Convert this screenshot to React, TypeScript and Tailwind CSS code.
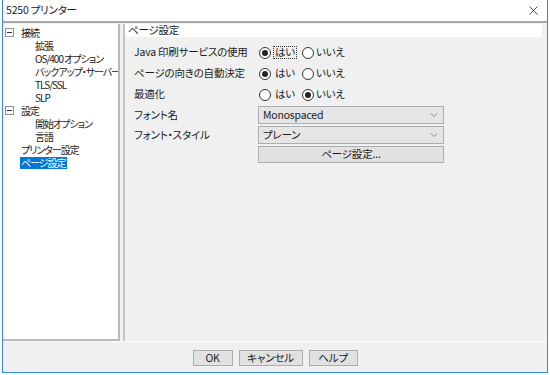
import { ChevronDown, X } from 'lucide-react';

// Tree entries: depth 0 = top-level node, 1 = child
const tree = [
  { label: '接続', depth: 0, box: true },
  { label: '拡張', depth: 1 },
  { label: 'OS/400 オプション', depth: 1 },
  { label: 'バックアップ・サーバー', depth: 1 },
  { label: 'TLS/SSL', depth: 1 },
  { label: 'SLP', depth: 1 },
  { label: '設定', depth: 0, box: true },
  { label: '開始オプション', depth: 1 },
  { label: '言語', depth: 1 },
  { label: 'プリンター設定', depth: 0 },
  { label: 'ページ設定', depth: 0, selected: true },
];

const radioRows = [
  { label: 'Java 印刷サービスの使用', yes: true, focus: true },
  { label: 'ページの向きの自動決定', yes: true },
  { label: '最適化', yes: false },
];

const Radio = ({ on }: { on: boolean }) => (
  <span className="w-[12px] h-[12px] rounded-full border border-[#333333] bg-white flex items-center justify-center">
    {on && <span className="w-[6px] h-[6px] rounded-full bg-[#222222]" />}
  </span>
);

const MinusBox = () => (
  <span className="w-[9px] h-[9px] border border-[#919191] bg-white flex items-center justify-center">
    <span className="w-[5px] h-px bg-[#333333]" />
  </span>
);

export default function App() {
  return (
    <div
      className="w-[550px] h-[375px] bg-white text-[#1a1a1a] text-[10.5px] leading-none overflow-hidden whitespace-nowrap [font-feature-settings:'palt'] tracking-[-0.2px]"
      style={{ fontFamily: '"Noto Sans CJK JP", "Noto Sans", sans-serif' }}
    >
      <div className="ml-[2px] w-[546px] h-[373px] border border-t-0 border-[#2f8de4] flex flex-col">
        {/* Title bar */}
        <div className="h-[23px] bg-white flex items-center justify-between pl-[3px] pr-[6px] border-b-2 border-[#a9a9a9]">
          <span>5250 プリンター</span>
          <X size={15} strokeWidth={1.2} className="text-[#111111]" />
        </div>

        <div className="flex-1 bg-[#f0f0f0] flex flex-col">
          <div className="h-[318px] flex pt-[1px]">
            {/* Tree panel */}
            <div className="w-[117px] bg-white border-r-2 border-b-2 border-[#b9b9b9] pt-[2px] overflow-hidden text-[10px] tracking-[-1px]">
              {tree.map((t, i) => (
                <div key={i} className="h-[13px] flex items-center">
                  {t.depth === 0 ? (
                    <div className="flex items-center">
                      <span className="w-[17px] pl-[2px] flex">{t.box && <MinusBox />}</span>
                      <span className={t.selected ? 'bg-[#0078d7] text-white px-[1px] py-[1px]' : 'px-[1px]'}>{t.label}</span>
                    </div>
                  ) : (
                    <span className="pl-[32px]">{t.label}</span>
                  )}
                </div>
              ))}
            </div>

            {/* Settings panel */}
            <div className="ml-[3px] w-[421px] border-l-2 border-[#c4c4c4]">
              <div className="h-[13px] bg-white flex items-center pl-[3px] mr-[2px]">ページ設定</div>
              <div className="pl-[9px] pt-[5px]">
                {radioRows.map((r, i) => (
                  <div key={i} className="h-[21px] flex items-center">
                    <span className="w-[125px]">{r.label}</span>
                    <span className="flex items-center gap-[2px]">
                      <Radio on={r.yes} />
                      <span className={r.focus ? 'border border-dotted border-[#333333] px-[1px]' : 'px-[2px]'}>はい</span>
                    </span>
                    <span className="flex items-center gap-[2px] ml-[5px]">
                      <Radio on={!r.yes} />
                      <span>いいえ</span>
                    </span>
                  </div>
                ))}
                <div className="h-[20px] flex items-center">
                  <span className="w-[124px]">フォント名</span>
                  <div className="w-[186px] h-[18px] bg-[#e5e5e5] border border-[#adadad] flex items-center justify-between pl-[4px] pr-[3px]">
                    <span>Monospaced</span>
                    <ChevronDown size={12} strokeWidth={1.3} className="text-[#555555]" />
                  </div>
                </div>
                <div className="h-[20px] flex items-center">
                  <span className="w-[124px]">フォント・スタイル</span>
                  <div className="w-[186px] h-[18px] bg-[#e5e5e5] border border-[#adadad] flex items-center justify-between pl-[4px] pr-[3px]">
                    <span>プレーン</span>
                    <ChevronDown size={12} strokeWidth={1.3} className="text-[#555555]" />
                  </div>
                </div>
                <div className="h-[19px] flex items-center">
                  <span className="w-[124px]" />
                  <button className="w-[186px] h-[17px] bg-[#e1e1e1] border border-[#adadad] flex items-center justify-center">
                    ページ設定...
                  </button>
                </div>
              </div>
            </div>
          </div>

          {/* Footer */}
          <div className="flex-1 border-t border-[#fbfbfb] flex items-start justify-center gap-[6px] pt-[8px]">
            <button className="w-[40px] h-[16px] bg-[#e1e1e1] border border-[#adadad] flex items-center justify-center">OK</button>
            <button className="w-[64px] h-[16px] bg-[#e1e1e1] border border-[#adadad] flex items-center justify-center">キャンセル</button>
            <button className="w-[49px] h-[16px] bg-[#e1e1e1] border border-[#adadad] flex items-center justify-center">ヘルプ</button>
          </div>
        </div>
      </div>
    </div>
  );
}
